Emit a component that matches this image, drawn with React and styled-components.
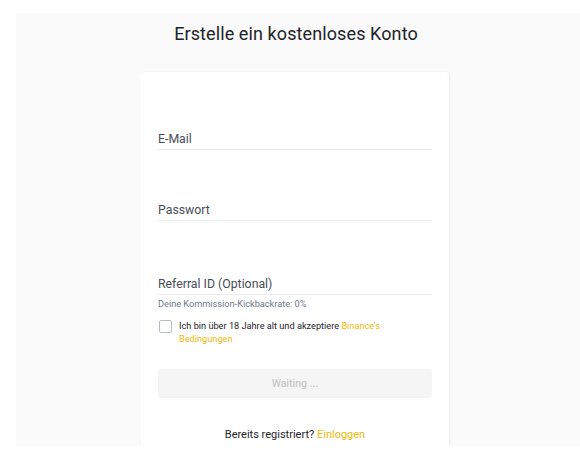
import styled, { createGlobalStyle } from 'styled-components';

const GlobalStyle = createGlobalStyle`
  html, body {
    margin: 0;
    padding: 0;
    background: #ffffff;
  }
  body {
    font-family: Roboto, "Noto Sans", Arial, sans-serif;
    color: #1e2329;
  }
`;

const Page = styled.div`
  height: 460px;
  padding: 13px 0 14px 16px;
  box-sizing: border-box;
  overflow: hidden;
`;

const Panel = styled.div`
  height: 100%;
  background: #fafafa;
  display: flex;
  flex-direction: column;
  align-items: center;
  overflow: hidden;
`;

const Title = styled.h1`
  margin: 9px 0 0 0;
  font-size: 18px;
  line-height: 24px;
  font-weight: 400;
  letter-spacing: 0.1px;
  color: #1e2329;
  padding-right: 4px;
`;

const Card = styled.div`
  margin-top: 26px;
  margin-right: 6px;
  width: 308px;
  flex: 1;
  box-sizing: border-box;
  background: #ffffff;
  border-radius: 4px 4px 0 0;
  box-shadow: 1px 0 2px rgba(0, 0, 0, 0.06);
  padding: 0 17px;
  display: flex;
  flex-direction: column;
`;

const Field = styled.div`
  padding-top: ${({ $top }) => $top}px;
  border-bottom: 1px solid #eaecef;
`;

const Label = styled.div`
  font-size: 12.3px;
  line-height: 16px;
  padding-bottom: 2px;
  color: #474d57;
`;

const Hint = styled.div`
  margin-top: 2px;
  font-size: 9.2px;
  line-height: 14px;
  color: #707a8a;
`;

const CheckRow = styled.label`
  display: flex;
  align-items: flex-start;
  gap: 7px;
  margin-top: 8px;
  padding-left: 1px;
  font-size: 9.2px;
  line-height: 13px;
  color: #1e2329;
`;

const Box = styled.span`
  flex: none;
  width: 11px;
  height: 11px;
  margin-top: 1px;
  border: 1px solid #b7bdc6;
  border-radius: 2px;
`;

const Link = styled.span`
  color: #f0b90b;
`;

const Button = styled.button`
  margin-top: 24px;
  height: 29px;
  width: 100%;
  border: 0;
  border-radius: 3px;
  background: #f5f5f5;
  color: #c8c8c8;
  font-family: inherit;
  font-size: 10.5px;
  font-weight: 500;
`;

const Footer = styled.div`
  margin-top: 30px;
  text-align: center;
  font-size: 11px;
  line-height: 14px;
  color: #1e2329;
`;

export default function App() {
  return (
    <>
      <GlobalStyle />
      <Page>
        <Panel>
          <Title>Erstelle ein kostenloses Konto</Title>
          <Card>
            <Field $top={59}>
              <Label>E-Mail</Label>
            </Field>
            <Field $top={52}>
              <Label>Passwort</Label>
            </Field>
            <Field $top={55}>
              <Label>Referral ID (Optional)</Label>
            </Field>
            <Hint>Deine Kommission-Kickbackrate: 0%</Hint>
            <CheckRow>
              <Box />
              <span>
                Ich bin über 18 Jahre alt und akzeptiere <Link>Binance's</Link>{' '}
                <Link>Bedingungen</Link>
              </span>
            </CheckRow>
            <Button disabled>Waiting ...</Button>
            <Footer>
              Bereits registriert? <Link>Einloggen</Link>
            </Footer>
          </Card>
        </Panel>
      </Page>
    </>
  );
}
